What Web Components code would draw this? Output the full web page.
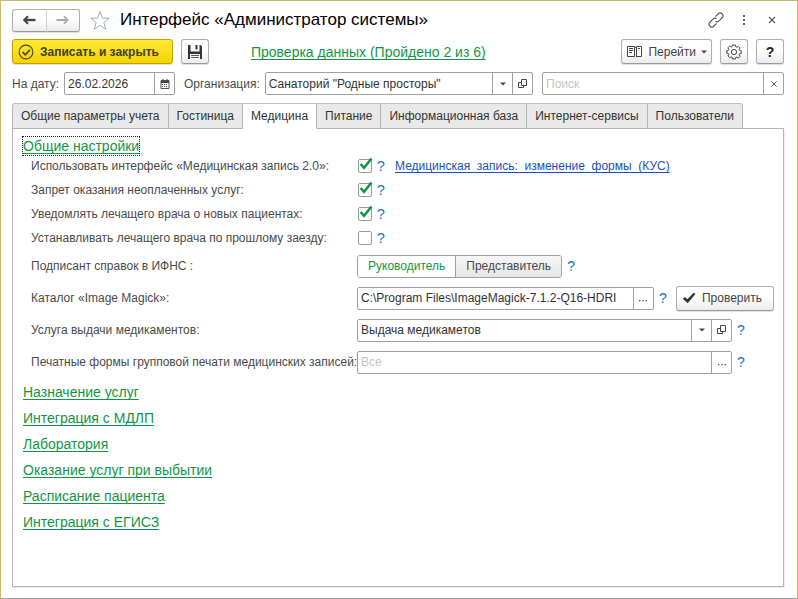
<!DOCTYPE html>
<html lang="ru">
<head>
<meta charset="utf-8">
<title>Интерфейс «Администратор системы»</title>
<style>
  html, body { height: 100%; }
  body { margin: 0; background: #fff; font: 12px/16px "Liberation Sans", Arial, sans-serif; color: #4a4a4a;
    --line: #a0a0a0; --green: #119646; --blue: #0b76bd; --ink: #333; }
</style>
</head>
<body>
<app-window>
  <title-bar slot="title" heading="Интерфейс «Администратор системы»"></title-bar>
  <command-bar slot="commands"></command-bar>
  <filter-bar slot="filters">
    <value-field label="На дату:" value="26.02.2026" actions="calendar" style="flex: 0 0 163px"></value-field>
    <value-field label="Организация:" value='Санаторий "Родные просторы"' actions="down open" style="flex: 349 1 0"></value-field>
    <value-field name="Поиск" placeholder="Поиск" actions="clear" style="flex: 242 1 0"></value-field>
  </filter-bar>
  <tab-strip slot="tabs" tabs="Общие параметры учета|Гостиница|Медицина|Питание|Информационная база|Интернет-сервисы|Пользователи" active="2"></tab-strip>
  <section-link focused>Общие настройки</section-link>
  <settings-list>
    <check-row label="Использовать интерфейс «Медицинская запись 2.0»:" checked><text-link>Медицинская_запись:_изменение_формы_(КУС)</text-link></check-row>
    <check-row label="Запрет оказания неоплаченных услуг:" checked></check-row>
    <check-row label="Уведомлять лечащего врача о новых пациентах:" checked></check-row>
    <check-row label="Устанавливать лечащего врача по прошлому заезду:"></check-row>
    <choice-row label="Подписант справок в ИФНС :" options="Руководитель|Представитель"></choice-row>
    <value-field wide label="Каталог «Image Magick»:" value="C:\Program Files\ImageMagick-7.1.2-Q16-HDRI" actions="more"><help-mark></help-mark><tool-button icon="tick" roomy>Проверить</tool-button></value-field>
    <value-field wide tail label="Услуга выдачи медикаментов:" value="Выдача медикаметов" actions="down open"><help-mark></help-mark></value-field>
    <value-field wide tail label="Печатные формы групповой печати медицинских записей:" placeholder="Все" actions="more"><help-mark></help-mark></value-field>
  </settings-list>
  <section-link>Назначение услуг</section-link>
  <section-link>Интеграция с МДЛП</section-link>
  <section-link>Лаборатория</section-link>
  <section-link>Оказание услуг при выбытии</section-link>
  <section-link>Расписание пациента</section-link>
  <section-link>Интеграция с ЕГИСЗ</section-link>
</app-window>

<script>
const ICONS = {
  back: [14, 10, '<path d="M13.500 5H4" fill="none" stroke="#444" stroke-width="2.400"/><path d="M6 1.300 2.300 5 6 8.700" fill="none" stroke="#444" stroke-width="2.200"/>'],
  forward: [14, 10, '<path d="M.5 5H10" fill="none" stroke="#aaa" stroke-width="2"/><path d="M8 1.300 11.700 5 8 8.700" fill="none" stroke="#aaa" stroke-width="1.800"/>'],
  star: [22, 21, '<path d="M11 1.500 13.400 8.200h6.800l-5.400 4.200 2 6.900L11 15.200l-5.800 4.100 2-6.900L1.800 8.200h6.800z" fill="none" stroke="#a5afb8" stroke-width="1"/>'],
  chain: [16, 16, '<g transform="rotate(-45 8 8)" fill="none" stroke="#555" stroke-width="1.200"><path d="M6 10.800H2.200a2.800 2.800 0 0 1 0-5.600h4.300a2.800 2.800 0 0 1 2.700 2.300"/><path d="M10 5.200h3.800a2.800 2.800 0 0 1 0 5.600H9.500a2.800 2.800 0 0 1-2.700-2.300"/></g>'],
  dots: [4, 12, '<path d="M1 1h2v2H1zM1 5h2v2H1zM1 9h2v2H1z" fill="#555"/>'],
  close: [8, 8, '<path d="M1 1l6 6M7 1 1 7" stroke="#555" stroke-width="1.100"/>'],
  okround: [16, 16, '<circle cx="8" cy="8" r="6.900" fill="none" stroke="#4a4520" stroke-width="1.100"/><path d="M4.500 8l2.700 2.800 4.800-5" fill="none" stroke="#4a4520" stroke-width="1.700"/>'],
  save: [16, 16, '<path d="M1 1h2.500v6.500h9V1h1L15 2.500V15H1z" fill="#333"/><path d="M8.500 1h2v4.500h-2z" fill="#333"/><path d="M3 10h10v5H3z" fill="#f8f8f8"/><path d="M4 11.500h8M4 13.500h8" stroke="#555"/>'],
  book: [16, 12, '<path d="M.5 .5h7v10h-7zM9.500 .5h5v10h-5z" fill="#fff" stroke="#444"/><path d="M7.500 .5l2 1.500v9" fill="none" stroke="#444"/><path d="M2 2.500h4M2 4.500h4M2 6.500h3M11 2.500h2" stroke="#444"/>'],
  gear: [16, 16, '<circle cx="8" cy="8" r="2.600" fill="none" stroke="#444"/><path d="M6.600 1h2.800l.4 1.700 1.100.5 1.500-.9 1.700 1.700-.9 1.500.5 1.100 1.500.3v2.400l-1.500.4-.5 1.100.9 1.500-1.700 1.700-1.500-.9-1.100.5L9.400 15H6.600l-.4-1.700-1.100-.5-1.500.9-1.700-1.700.9-1.500-.5-1.100L.8 9.200V6.800l1.500-.4.5-1.100-.9-1.500 1.700-1.700 1.500.9 1.100-.5z" fill="none" stroke="#444" stroke-linejoin="round"/>'],
  calendar: [10, 10, '<path d="M1 1.500h8v8H1z" fill="#fff" stroke="#555"/><path d="M1 2h8v2H1z" fill="#444"/><path d="M3 0v2M7 0v2" stroke="#444"/><path d="M2 5.500h6M2 7.500h6" stroke="#555" stroke-dasharray="1 1"/>'],
  down: [6, 4, '<path d="M0 .5h6L3 3.500z" fill="#444"/>'],
  open: [10, 10, '<path d="M3.500 .5h5v6h-5zM3.500 3.500h-3v5h5v-2" fill="none" stroke="#444"/>'],
  clear: [6, 6, '<path d="M.5 .5l5 5M5.500.5l-5 5" stroke="#555"/>'],
  more: [8, 8, '<path d="M0 6h1.300v1.300H0zM3.300 6h1.300v1.300H3.300zM6.600 6h1.300v1.300H6.600z" fill="#444"/>'],
  tick: [14, 12, '<path d="M.8 6.700 3 5l2.300 2.300L11.800.8 13.500 2 5.700 11.300z" fill="#333"/>']
};
const ACTION_NAMES = { calendar: 'Выбрать дату', down: 'Показать список', open: 'Открыть', clear: 'Очистить', more: 'Выбрать' };

const BASE = `
  * { box-sizing: border-box; }
  button, input { font: inherit; color: inherit; margin: 0; }
  button { padding: 0; }
  label { white-space: nowrap; }
  .push { display: inline-flex; align-items: center; justify-content: center; height: 25px; border: 1px solid #aeaeae;
    border-bottom-color: #999; border-radius: 3px; background: linear-gradient(#fff 40%, #ececec); color: #444; box-shadow: 0 1px 1px #ddd; }
  .bare { border: 0; background: none; display: flex; align-items: center; justify-content: center; }
`;

function define(name, css, markup, setup) {
  customElements.define(name, class extends HTMLElement {
    connectedCallback() {
      if (this.shadowRoot) return;
      const root = this.attachShadow({ mode: 'open' });
      root.innerHTML = '<style>' + BASE + css + '</style>' + (typeof markup === 'function' ? markup(this) : markup);
      if (setup) setup(this, root);
    }
  });
}
const attr = (el, key) => (el.getAttribute(key) || '').replace(/"/g, '&quot;');

define('ui-icon', ':host { display: inline-flex; flex: none; } svg { display: block; }', el => {
  const [w, h, body] = ICONS[attr(el, 'name')];
  return `<svg width="${w}" height="${h}" viewBox="0 0 ${w} ${h}" aria-hidden="true">${body}</svg>`;
});

define('app-window', `
  :host { display: flex; flex-direction: column; min-height: 100%; box-sizing: border-box; padding: 7px 13px 11px 11px;
    border: 1px solid #c8b96c; border-bottom-color: #a0a0a0; background: #fff; }
  main { flex: 1; border: 1px solid #b4b4b4; border-top: 0; padding: 4px 9px 20px; display: flex; flex-direction: column; box-shadow: 1px 1px 0 #eee; }
`, `<slot name="title"></slot><slot name="commands"></slot><slot name="filters"></slot><slot name="tabs"></slot><main><slot></slot></main>`);

define('title-bar', `
  :host { display: flex; align-items: center; height: 24px; }
  .nav { display: flex; width: 68px; height: 23px; }
  .nav .push { flex: 1; height: 23px; }
  .nav .push:first-of-type { border-radius: 3px 0 0 3px; border-right-color: #ccc; }
  .nav .push:last-of-type { border-radius: 0 3px 3px 0; border-left: 0; }
  .star { margin: 0 9px; }
  h1 { flex: 1; margin: 0; font-size: 17px; line-height: 22px; font-weight: 400; color: #000; white-space: nowrap; }
  .end { display: flex; align-items: center; gap: 4px; }
  .end .bare { width: 24px; height: 24px; }
`, el => `<div class="nav"><button class="push" aria-label="Назад"><ui-icon name="back"></ui-icon></button><button class="push" aria-label="Вперед"><ui-icon name="forward"></ui-icon></button></div>
  <button class="bare star" aria-label="В избранное"><ui-icon name="star"></ui-icon></button>
  <h1>${attr(el, 'heading')}</h1>
  <div class="end"><button class="bare" aria-label="Ссылка"><ui-icon name="chain"></ui-icon></button><button class="bare" aria-label="Меню"><ui-icon name="dots"></ui-icon></button><button class="bare" aria-label="Закрыть"><ui-icon name="close"></ui-icon></button></div>`);

define('tool-button', `
  :host { display: inline-flex; flex: none; }
  .push { width: 100%; min-width: 28px; gap: 6px; padding: 0 5px; white-space: nowrap; }
  :host([primary]) .push { font-weight: 700; border-color: #c0a000; background: linear-gradient(#ffe936, #f5d400); padding: 0 13px 0 5px; color: #444020; }
  :host([strong]) .push { font-weight: 700; font-size: 14px; color: #222; }
  :host([menu]) .push { gap: 5px; padding: 0 4px 0 5px; }
  :host([roomy]) { margin-left: 4px; }
  :host([roomy]) .push { padding: 0 11px 0 5px; }
`, el => `<button class="push" ${el.hasAttribute('name') ? `aria-label="${attr(el, 'name')}"` : ''}>${el.hasAttribute('icon') ? `<ui-icon name="${attr(el, 'icon')}"></ui-icon>` : ''}<slot></slot>${el.hasAttribute('menu') ? '<ui-icon name="down"></ui-icon>' : ''}</button>`);

define('command-bar', `
  :host { display: flex; align-items: center; gap: 8px; margin-top: 7px; height: 25px; }
  .mid { flex: 1; padding-left: 33px; }
`, `<tool-button primary icon="okround">Записать и закрыть</tool-button><tool-button icon="save" name="Записать"></tool-button>
  <div class="mid"><section-link>Проверка данных (Пройдено 2 из 6)</section-link></div>
  <tool-button icon="book" menu>Перейти</tool-button><tool-button icon="gear" name="Настройки"></tool-button><tool-button strong>?</tool-button>`);

define('filter-bar', ':host { display: flex; gap: 9px; margin-top: 8px; }', '<slot></slot>');

define('value-field', `
  :host { display: flex; align-items: center; gap: 5px; min-width: 0; }
  :host([wide]) { height: 32px; gap: 0; }
  :host([wide]) label { flex: 0 0 326px; min-width: 0; }
  :host([tail]) { padding-right: 24px; }
  .box { flex: 1; min-width: 0; display: flex; height: 23px; border: 1px solid var(--line); border-radius: 2px; background: #fff; color: var(--ink); }
  input { flex: 1; min-width: 0; width: 0; border: 0; padding: 0 3px; background: none; outline: 0; }
  input::placeholder { color: #c4c4c4; opacity: 1; }
  .act { width: 20px; border: 0; border-left: 1px solid var(--line); background: none; display: flex; align-items: center; justify-content: center; }
`, el => `${el.hasAttribute('label') ? `<label for="f">${attr(el, 'label')}</label>` : ''}
  <div class="box"><input id="f" type="text" value="${attr(el, 'value')}" placeholder="${attr(el, 'placeholder')}" ${el.hasAttribute('name') ? `aria-label="${attr(el, 'name')}"` : ''}>${attr(el, 'actions').split(' ').map(a => `<button class="act" aria-label="${ACTION_NAMES[a]}"><ui-icon name="${a}"></ui-icon></button>`).join('')}</div><slot></slot>`);

define('tab-strip', `
  :host { display: flex; margin-top: 8px; height: 26px; }
  button { flex: none; padding: 0 8px; border: 1px solid #b4b4b4; border-left-width: 0; background: #e9e9e9; color: var(--ink); white-space: nowrap; border-top-color: #c0c0c0; }
  button:first-of-type { border-left-width: 1px; border-radius: 3px 0 0 0; }
  button:last-of-type { border-radius: 0 3px 0 0; }
  button[aria-selected=true] { background: #fff; border-bottom-color: #fff; }
  .rest { flex: 1; border-bottom: 1px solid #b4b4b4; }
`, el => attr(el, 'tabs').split('|').map((t, i) => `<button role="tab" aria-selected="${i === +attr(el, 'active')}">${t}</button>`).join('') + '<span class="rest"></span>',
(el, root) => root.addEventListener('click', e => {
  const hit = e.target.closest('button');
  if (hit) root.querySelectorAll('button').forEach(b => b.setAttribute('aria-selected', b === hit));
}));

define('section-link', `
  :host { display: flex; height: 26px; align-items: center; padding-left: 1px; }
  a { color: var(--green); font-size: 14px; line-height: 18px; text-decoration: underline; text-decoration-skip-ink: none; text-underline-offset: 2px; white-space: nowrap; }
  :host([focused]) a { outline: 1px dotted #222; }
`, '<a href="#"><slot></slot></a>');

define('text-link', `:host { display: inline-block; margin-left: 5px; } a { color: #1a50b8; text-decoration-skip-ink: none; text-underline-offset: 2px; white-space: nowrap; }`, '<a href="#"><slot></slot></a>');

define('help-mark', `:host { display: inline-block; flex: none; width: 18px; } button { width: 100%; border: 0; background: none; color: var(--blue); font-size: 14px; line-height: 16px; }`, '<button>?</button>');

define('settings-list', `:host { display: flex; flex-direction: column; margin: -5px 0 1px 9px; } ::slotted(*) { flex: none; }`, '<slot></slot>');

define('check-row', `
  :host { display: flex; align-items: center; height: 24px; }
  label { flex: 0 0 327px; }
  .tick { position: relative; display: flex; }
  input { appearance: none; width: 14px; height: 14px; border: 1px solid #999; border-radius: 2px; background: #fff; }
  svg { position: absolute; left: 1px; top: -2px; display: none; pointer-events: none; }
  input:checked + svg { display: block; }
`, el => `<label for="c">${attr(el, 'label')}</label><span class="tick"><input id="c" type="checkbox" ${el.hasAttribute('checked') ? 'checked' : ''}><svg width="15" height="14" viewBox="0 0 15 14"><path d="M1.500 7 5 10.800 12.500 1.500" fill="none" stroke="#119646" stroke-width="2.500"/></svg></span><help-mark></help-mark><slot></slot>`);

define('choice-row', `
  :host { display: block; }
  fieldset { border: 0; margin: 0; padding: 0; display: flex; align-items: center; height: 32px; min-width: 0; }
  .name { flex: 0 0 326px; }
  .set { display: flex; height: 23px; border: 1px solid var(--line); border-radius: 3px; overflow: hidden; }
  .set label { display: flex; align-items: center; padding: 0 10px; background: linear-gradient(#f6f6f6, #e6e6e6); cursor: default; }
  .set label + label { border-left: 1px solid var(--line); }
  .set label:has(:checked) { background: #fff; color: var(--green); }
  input { appearance: none; width: 0; height: 0; }
`, el => `<fieldset aria-labelledby="n"><span class="name" id="n">${attr(el, 'label')}</span><span class="set">${attr(el, 'options').split('|').map((o, i) => `<label><input type="radio" name="signer" ${i ? '' : 'checked'}>${o}</label>`).join('')}</span><help-mark></help-mark></fieldset>`);
</script>
</body>
</html>
